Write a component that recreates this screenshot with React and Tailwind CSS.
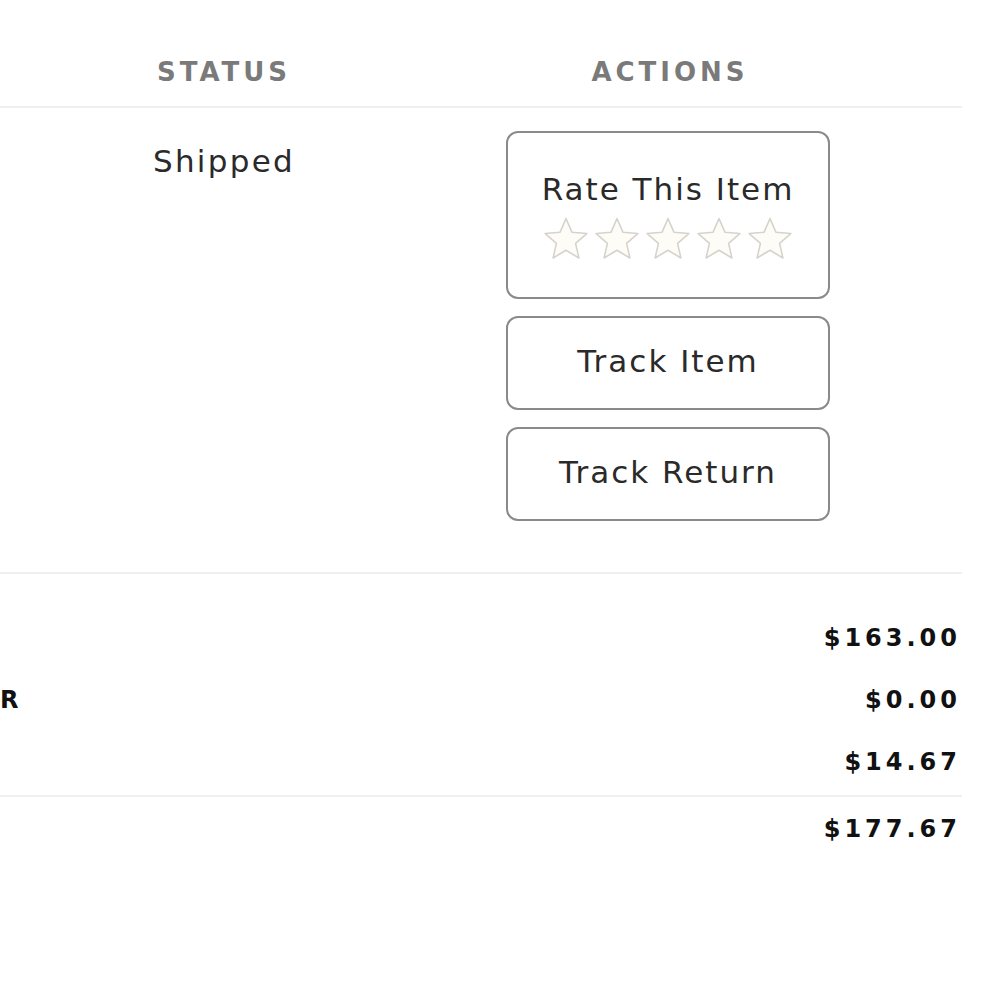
import React from "react";

const Star = () => (
  <svg width="50" height="50" viewBox="0 0 24 24" className="block">
    <path
      d="M12 2.2l2.9 6.6 7.1.6-5.4 4.7 1.6 7-6.2-3.7-6.2 3.7 1.6-7L2 9.4l7.1-.6z"
      fill="#fdfcf7"
      stroke="#d6d3cc"
      strokeWidth="0.75"
      strokeLinejoin="round"
    />
  </svg>
);

const btn =
  "w-[324px] rounded-[12px] border-2 border-[#8a8a8a] bg-white flex flex-col items-center text-[#2a2a2a] text-[31px] tracking-[2px]";

export default function App() {
  const body = { fontFamily: '"DejaVu Sans", "Noto Sans", sans-serif' };
  const head = { fontFamily: '"DejaVu Sans", sans-serif' };
  return (
    <div className="w-[1000px] h-[1000px] bg-white overflow-hidden">
      <div className="w-[962px]">
        {/* header */}
        <div className="flex h-[108px] border-b-2 border-[#efefef] pt-[56px]" style={head}>
          <div className="w-[112px]" />
          <div className="w-[220px] text-center font-bold text-[26px] leading-[32px] tracking-[4px] text-[#7a7a7a] pl-[4px]">
            STATUS
          </div>
          <div className="flex-1 text-center font-bold text-[26px] leading-[32px] tracking-[4px] text-[#7a7a7a] pl-[46px]">
            ACTIONS
          </div>
        </div>
        {/* row */}
        <div className="flex border-b-2 border-[#efefef] pt-[23px] pb-[51px]" style={body}>
          <div className="w-[112px]" />
          <div className="w-[220px] text-center text-[31px] leading-[40px] text-[#2a2a2a] pt-[10px] tracking-[2.3px] pl-[4px]">
            Shipped
          </div>
          <div className="flex-1 pl-[42px] flex flex-col items-center gap-[17px]">
            <div className={btn + " h-[168px] pt-[36px]"}>
              <span className="leading-[40px]">Rate This Item</span>
              <div className="flex gap-[1px] mt-[5px]">
                <Star />
                <Star />
                <Star />
                <Star />
                <Star />
              </div>
            </div>
            <div className={btn + " h-[94px] justify-center"}>
              <span className="-mt-[4px]">Track Item</span>
            </div>
            <div className={btn + " h-[94px] justify-center"}>
              <span className="-mt-[4px]">Track Return</span>
            </div>
          </div>
        </div>
        {/* totals */}
        <div style={head} className="font-bold text-[#111] text-[24px] tracking-[4px]">
          <div className="pt-[49px] flex flex-col gap-[32px]">
            <div className="flex justify-between h-[30px] leading-[30px]">
              <span />
              <span className="pr-[1px]">$163.00</span>
            </div>
            <div className="flex justify-between h-[30px] leading-[30px]">
              <span>R</span>
              <span className="pr-[1px]">$0.00</span>
            </div>
            <div className="flex justify-between h-[30px] leading-[30px]">
              <span />
              <span className="pr-[1px]">$14.67</span>
            </div>
          </div>
          <div className="mt-[18px] border-t-2 border-[#efefef] pt-[17px] flex justify-between h-[30px] leading-[30px] box-content">
            <span />
            <span className="pr-[1px]">$177.67</span>
          </div>
        </div>
      </div>
    </div>
  );
}
